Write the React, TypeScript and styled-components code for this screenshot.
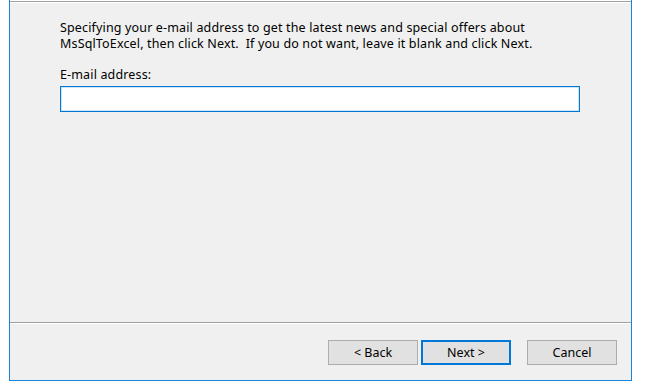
import React from 'react'
import styled, { createGlobalStyle } from 'styled-components'

const GlobalStyle = createGlobalStyle`
    html, body {
        margin: 0;
        padding: 0;
        background: #ffffff;
    }
    body {
        font-family: "Segoe UI", "Noto Sans", "Liberation Sans", sans-serif;
        font-size: 12.5px;
        letter-spacing: 0.15px;
        color: #000000;
    }
`

function App() {
    return (
        <>
            <GlobalStyle />
            <Window>
                <HeaderRule />
                <Body>
                    <Intro>
                        Specifying your e-mail address to get the latest news and special offers about<br />
                        MsSqlToExcel, then click Next.&nbsp; If you do not want, leave it blank and click Next.
                    </Intro>
                    <FieldLabel htmlFor="email">E-mail address:</FieldLabel>
                    <EmailInput id="email" type="text" />
                </Body>
                <Footer>
                    <Button>&lt; Back</Button>
                    <Button primary>Next &gt;</Button>
                    <Button gapLeft>Cancel</Button>
                </Footer>
            </Window>
        </>
    )
}

const Window = styled.div`
    margin-left: 9px;
    width: 623px;
    height: 381px;
    box-sizing: border-box;
    border: 1px solid #1883d7;
    border-top: none;
    background: #f0f0f0;
    display: flex;
    flex-direction: column;
`

const HeaderRule = styled.div`
    height: 1px;
    background: #ffffff;
    border-bottom: 1px solid #a0a0a0;
    box-shadow: 0 1px 0 #ffffff;
    flex-shrink: 0;
`

const Body = styled.div`
    flex: 1;
    display: flex;
    flex-direction: column;
    align-items: flex-start;
    padding: 18px 0 0 50px;
`

const Intro = styled.div`
    line-height: 16px;
    white-space: nowrap;
`

const FieldLabel = styled.label`
    margin-top: 15px;
    line-height: 16px;
`

const EmailInput = styled.input`
    margin-top: 3px;
    width: 520px;
    height: 26px;
    box-sizing: border-box;
    border: 1px solid #0078d7;
    box-shadow: inset 0 0 0 1px #cfe4f6;
    background: #ffffff;
    outline: none;
    padding: 0 4px;
    font: inherit;
`

const Footer = styled.div`
    height: 58px;
    flex-shrink: 0;
    box-sizing: border-box;
    border-top: 1px solid #a0a0a0;
    box-shadow: inset 0 1px 0 #ffffff;
    display: flex;
    justify-content: flex-end;
    align-items: flex-start;
    gap: 3px;
    padding: 17px 14px 0 0;
`

const Button = styled.button<{ primary?: boolean, gapLeft?: boolean }>`
    width: 90px;
    height: 25px;
    box-sizing: border-box;
    margin-left: ${p => p.gapLeft ? '13px' : '0'};
    border: ${p => p.primary ? '2px solid #0078d7' : '1px solid #adadad'};
    background: #e1e1e1;
    font: inherit;
    color: #000000;
    padding: 0;
`

export default App
